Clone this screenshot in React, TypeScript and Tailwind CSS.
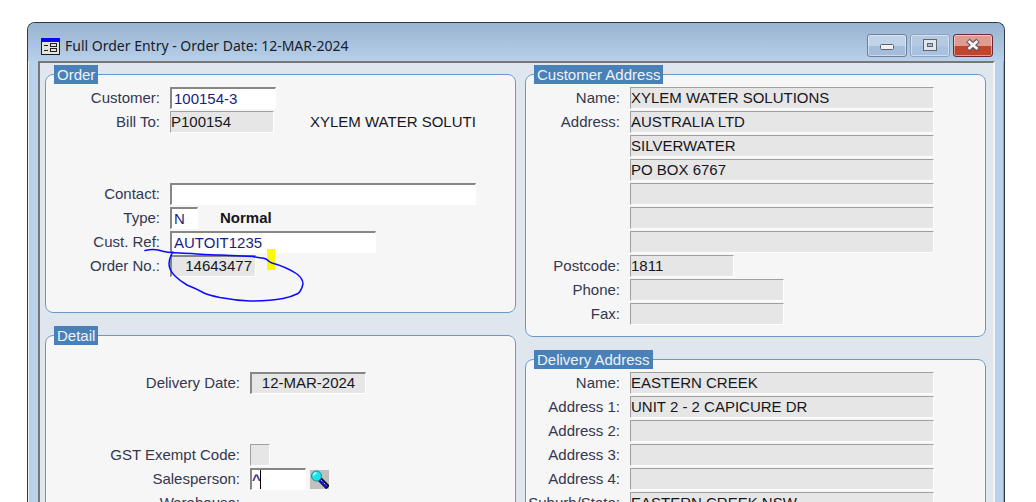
import type { ReactNode } from "react"

type Variant = "edit" | "locked" | "flat"

interface FieldProps {
  id: string
  value?: string
  variant?: Variant
  width: string
  align?: string
  ariaLabel?: string
}

const variants: Record<Variant, string> = {
  edit: "bg-white text-[#1c1c84] border-t-2 border-l-2 border-t-[#868686] border-l-[#868686] pl-[2px]",
  locked: "bg-[#e6e6e6] text-[#16161c] border-t-2 border-l-2 border-t-[#868686] border-l-[#868686] px-[3px] pb-[2px]",
  flat: "bg-[#e6e6e6] text-[#16161c] border-t border-l border-t-[#a0a0a0] border-l-[#a0a0a0] pb-[2px]",
}

const Field = ({ id, value = "", variant = "flat", width, align = "", ariaLabel }: FieldProps) => (
  <input
    id={id}
    type="text"
    defaultValue={value}
    readOnly={variant !== "edit"}
    aria-label={ariaLabel}
    className={`h-[22px] min-w-0 rounded-none border-r border-b border-r-white border-b-white outline-none ${variants[variant]} ${width} ${align}`}
  />
)

interface RowProps {
  label?: string
  htmlFor?: string
  labelWidth: string
  children?: ReactNode
}

const Row = ({ label, htmlFor, labelWidth, children }: RowProps) => (
  <div className="flex h-6 items-center">
    <label
      htmlFor={htmlFor}
      className={`mr-[10px] shrink-0 whitespace-nowrap text-right text-[#34374f] ${labelWidth}`}
    >
      {label}
    </label>
    {children}
  </div>
)

const Group = ({ title, className = "", children }: { title: string; className?: string; children: ReactNode }) => (
  <fieldset className={`min-w-0 rounded-lg border border-[#6b98c8] bg-[#f6f6f6] pt-[2px] ${className}`}>
    <legend className="ml-2 h-[19px] bg-[#4a80b8] px-[3px] leading-[19px] text-[#eef3fa]">{title}</legend>
    {children}
  </fieldset>
)

const customerRows = [
  { id: "cust-name", label: "Name:", value: "XYLEM WATER SOLUTIONS", width: "w-[304px]" },
  { id: "cust-address", label: "Address:", value: "AUSTRALIA LTD", width: "w-[304px]" },
  { id: "cust-address-2", ariaLabel: "Address line 2", value: "SILVERWATER", width: "w-[304px]" },
  { id: "cust-address-3", ariaLabel: "Address line 3", value: "PO BOX 6767", width: "w-[304px]" },
  { id: "cust-address-4", ariaLabel: "Address line 4", width: "w-[304px]" },
  { id: "cust-address-5", ariaLabel: "Address line 5", width: "w-[304px]" },
  { id: "cust-address-6", ariaLabel: "Address line 6", width: "w-[304px]" },
  { id: "cust-postcode", label: "Postcode:", value: "1811", width: "w-[104px]" },
  { id: "cust-phone", label: "Phone:", width: "w-[154px]" },
  { id: "cust-fax", label: "Fax:", width: "w-[154px]" },
]

const deliveryRows = [
  { id: "del-name", label: "Name:", value: "EASTERN CREEK" },
  { id: "del-address-1", label: "Address 1:", value: "UNIT 2 - 2 CAPICURE DR" },
  { id: "del-address-2", label: "Address 2:" },
  { id: "del-address-3", label: "Address 3:" },
  { id: "del-address-4", label: "Address 4:" },
  { id: "del-suburb", label: "Suburb/State:", value: "EASTERN CREEK NSW" },
]

const FormIcon = () => (
  <svg width="19" height="17" viewBox="0 0 19 17" shapeRendering="crispEdges" className="shrink-0">
    <rect width="19" height="17" fill="#1c1c1c" />
    <rect x="1" y="4" width="17" height="12" fill="#e4e4dc" />
    <rect width="19" height="4" fill="#0808f4" />
    <path d="M3 7.5h4M3 12.5h4" stroke="#222" />
    <path d="M9.5 5.5h6v3h-6zM9.5 10.5h6v3h-6z" fill="#e4e4dc" stroke="#222" />
  </svg>
)

const SearchIcon = () => (
  <svg width="19" height="19" viewBox="0 0 19 19">
    <path d="M10 9.500l8 8" stroke="#000" strokeWidth="5" />
    <path d="M9.500 9.500l7.500 7.500" stroke="#1414d8" strokeWidth="3" />
    <path d="M11 10l6 6" stroke="#c8c8ff" strokeWidth="1" strokeDasharray="2 2" />
    <circle cx="6.500" cy="6" r="5" fill="#18e4ec" stroke="#1a8c98" strokeWidth="1" />
    <path d="M3.500 5.500a3 3 0 0 1 3-2.500" stroke="#d4ffff" strokeWidth="1.500" fill="none" />
  </svg>
)

const frameButton =
  "flex h-[23px] w-10 items-center justify-center rounded-[3px] border shadow-[inset_0_0_0_1px_rgba(255,255,255,0.45)]"

const TitleBar = () => (
  <header className="flex h-[38px] shrink-0 items-center bg-linear-to-b from-[#98b3d0] to-[#b8d0e9] pl-[13px]">
    <div className="flex flex-1 items-center gap-[5px] pt-2">
      <FormIcon />
      <h1 className="whitespace-nowrap font-['Noto_Sans','Open_Sans',sans-serif] text-sm text-[#16202c]">
        Full Order Entry - Order Date: 12-MAR-2024
      </h1>
    </div>
    <div className="flex gap-[3px] pt-[6px] pr-[11px]">
      <button
        type="button"
        aria-label="Minimize"
        className={`${frameButton} border-[#6b7f9b] bg-linear-to-b from-[#c0d3e9] from-50% to-[#a3bdda] to-50%`}
      >
        <svg width="14" height="14" viewBox="0 0 14 14">
          <rect x="0.500" y="6.500" width="13" height="5" rx="1" fill="#f0f0f0" stroke="#5c6470" />
        </svg>
      </button>
      <button
        type="button"
        aria-label="Maximize"
        className={`${frameButton} border-[#8ba3c0] bg-linear-to-b from-[#b4cae3] from-50% to-[#a8c2df] to-50%`}
      >
        <svg width="14" height="14" viewBox="0 0 14 14">
          <rect x="0.500" y="1.500" width="13" height="11" fill="#e2e5ea" stroke="#5c6470" />
          <rect x="4.500" y="5.500" width="5" height="3" fill="#a8bed8" stroke="#5c6470" />
        </svg>
      </button>
      <button
        type="button"
        aria-label="Close"
        className={`${frameButton} border-[#6a2a35] bg-linear-to-b from-[#e09a90] from-50% to-[#c1452c] to-50%`}
      >
        <svg width="16" height="14" viewBox="0 0 16 14">
          <path d="M3 2.500l10 9M13 2.500l-10 9" stroke="#5a4c58" strokeWidth="5" />
          <path d="M3.500 3l9 8M12.500 3l-9 8" stroke="#f4f4f4" strokeWidth="3" />
        </svg>
      </button>
    </div>
  </header>
)

const OrderGroup = () => (
  <Group title="Order" className="pb-[34px]">
    <div className="relative">
      <Row label="Customer:" htmlFor="customer" labelWidth="w-[114px]">
        <Field id="customer" value="100154-3" variant="edit" width="w-[106px]" />
      </Row>
      <Row label="Bill To:" htmlFor="bill-to" labelWidth="w-[114px]">
        <Field id="bill-to" value="P100154" width="w-[104px]" />
        <span className="ml-9 whitespace-nowrap text-[#16161c]">XYLEM WATER SOLUTI</span>
      </Row>
      <div className="h-12" />
      <Row label="Contact:" htmlFor="contact" labelWidth="w-[114px]">
        <Field id="contact" variant="edit" width="w-[306px]" />
      </Row>
      <Row label="Type:" htmlFor="type" labelWidth="w-[114px]">
        <Field id="type" value="N" variant="edit" width="w-7" />
        <span className="ml-[22px] font-bold text-[#16161c]">Normal</span>
      </Row>
      <Row label="Cust. Ref:" htmlFor="cust-ref" labelWidth="w-[114px]">
        <Field id="cust-ref" value="AUTOIT1235" variant="edit" width="w-[206px]" />
      </Row>
      <Row label="Order No.:" htmlFor="order-no" labelWidth="w-[114px]">
        <Field id="order-no" value="14643477" variant="locked" width="w-[86px]" align="text-right" />
      </Row>

      {/* Pen and highlighter marks over the order number */}
      <svg
        width="164"
        height="60"
        viewBox="144 246 164 60"
        className="pointer-events-none absolute top-40 left-[98px]"
      >
        <rect x="267" y="249" width="8" height="21" fill="#fbfb00" />
        <path
          d="M145 250.500C149 249.500 154 249 158 250C164 252 171 253 180 253C194 253.500 207 255 220 255C232 255.500 244 256 253 256.500C258 258 263 257.500 266 259C268 260 269 262 272 263C283 266 291 270 297 274C302 278 303 281 303 284C302 288 300 292 298 293.500C293 296 289 297.500 283 298.500C272 300.500 261 301 250 301C238 300.500 228 299 220 297.500C213 296 208 295 204 293C197 289 192 287 187 285C182 282 179 280 175 276C171 272 169 268 169 264C169 259 171 255 173 252"
          fill="none"
          stroke="#0a0aff"
          strokeWidth="1.500"
          strokeLinecap="round"
        />
      </svg>
    </div>
  </Group>
)

const DetailGroup = () => (
  <Group title="Detail" className="flex-1">
    <div className="pt-6">
      <Row label="Delivery Date:" htmlFor="delivery-date" labelWidth="w-[194px]">
        <Field id="delivery-date" value="12-MAR-2024" variant="locked" width="w-[116px]" align="text-center" />
      </Row>
      <div className="h-12" />
      <Row label="GST Exempt Code:" htmlFor="gst" labelWidth="w-[194px]">
        <Field id="gst" width="w-5" />
      </Row>
      <Row label="Salesperson:" htmlFor="salesperson" labelWidth="w-[194px]">
        <div className="flex h-[22px] w-14 border-t-2 border-l-2 border-r border-b border-t-[#868686] border-l-[#868686] border-r-white border-b-white bg-white">
          <input
            id="salesperson"
            type="text"
            defaultValue="^"
            className="w-2 bg-transparent font-bold text-[#4a2a90] outline-none"
          />
          <span className="w-px bg-black" />
        </div>
        <button type="button" aria-label="Find salesperson" className="ml-1 size-[19px] bg-[#c0c0c0]">
          <SearchIcon />
        </button>
      </Row>
      <Row label="Warehouse:" labelWidth="w-[194px]" />
    </div>
  </Group>
)

export default function App() {
  return (
    <div className="flex h-screen flex-col overflow-hidden bg-white pt-[22px] pr-[31px] pl-[27px] font-['Liberation_Sans',Arial,sans-serif] text-[15px] leading-5">
      <div className="flex min-h-0 flex-1 flex-col overflow-hidden rounded-t-lg border-t border-r border-l border-[#303a44] bg-[#b9d1ea] shadow-[inset_-1px_0_0_#45c4e4,inset_1px_0_0_#e8f0f8]">
        <TitleBar />
        <main className="mr-[9px] ml-[10px] grid min-h-0 flex-1 grid-cols-[471fr_461fr] gap-x-[9px] overflow-hidden border-t-2 border-r-2 border-l-2 border-t-[#777777] border-r-[#f4f4f0] border-l-[#777777] bg-[#e0e6ed] pt-[2px] pr-[7px] pl-[5px]">
          <div className="flex min-w-0 flex-col gap-[13px]">
            <OrderGroup />
            <DetailGroup />
          </div>
          <div className="flex min-w-0 flex-col gap-[13px]">
            <Group title="Customer Address" className="pb-[10px]">
              {customerRows.map(row => (
                <Row key={row.id} label={row.label} htmlFor={row.id} labelWidth="w-[94px]">
                  <Field id={row.id} value={row.value} width={row.width} ariaLabel={row.ariaLabel} />
                </Row>
              ))}
            </Group>
            <Group title="Delivery Address" className="flex-1">
              {deliveryRows.map(row => (
                <Row key={row.id} label={row.label} htmlFor={row.id} labelWidth="w-[94px]">
                  <Field id={row.id} value={row.value} width="w-[304px]" />
                </Row>
              ))}
            </Group>
          </div>
        </main>
      </div>
    </div>
  )
}
